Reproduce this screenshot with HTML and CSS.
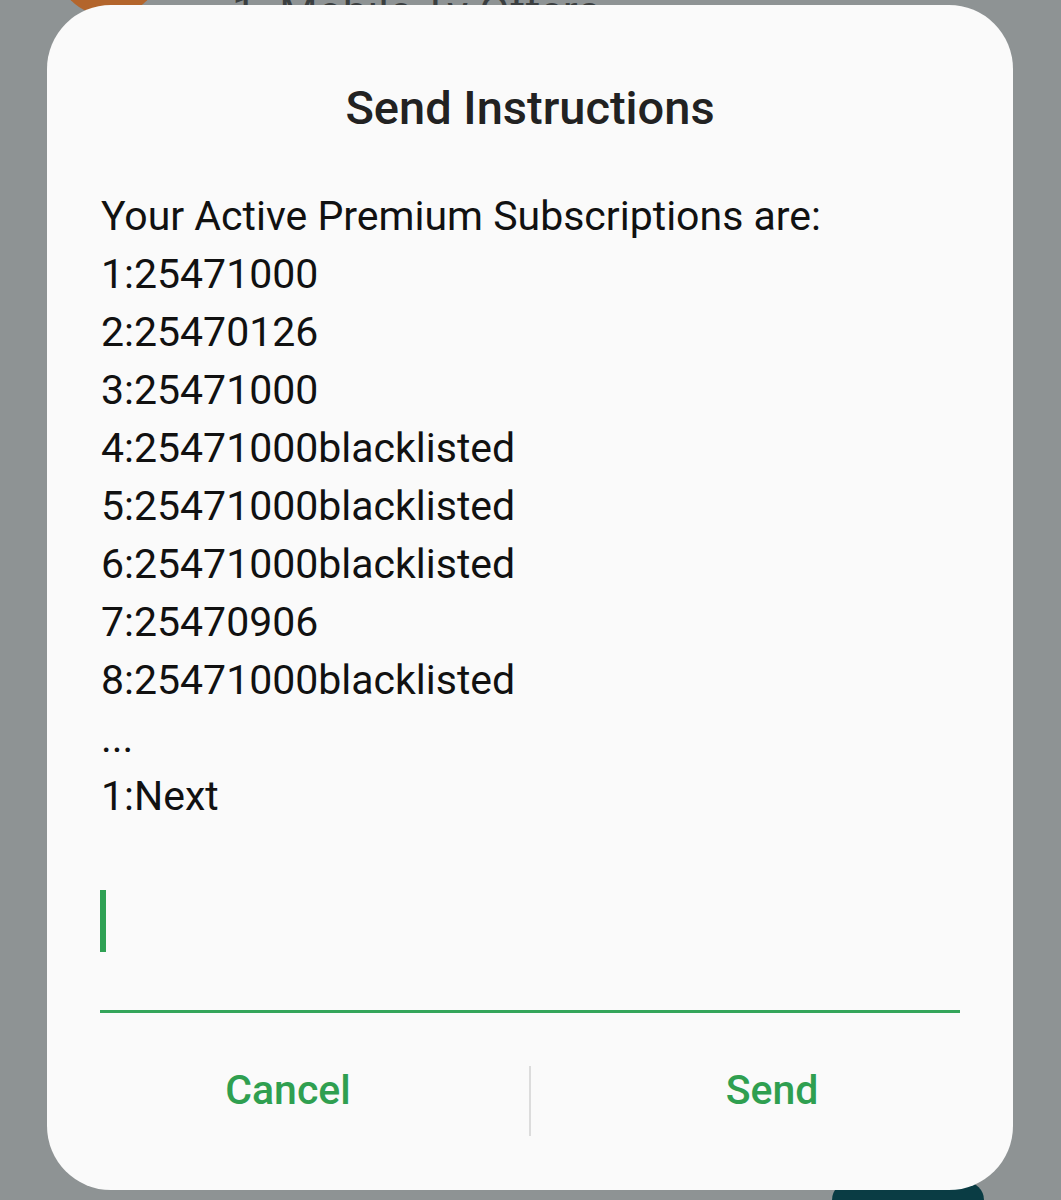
FILE: index.html
```html
<!DOCTYPE html>
<html lang="en">
<head>
    <meta charset="UTF-8">
    <meta name="viewport" content="width=device-width, initial-scale=1.0">
    <title>Send Instructions</title>
    <link rel="stylesheet" href="styles.css">
</head>
<body>
    <!-- contenido detras del dialogo -->
    <div class="fondo-avatar"></div>
    <div class="fondo-texto">1. Mobile Tv Offers</div>
    <div class="fondo-fab"></div>

    <div class="pantalla">
        <div class="dialogo">
            <h2 class="titulo">Send Instructions</h2>
            <div class="mensaje">
                <p>Your Active Premium Subscriptions are:</p>
                <p>1:25471000</p>
                <p>2:25470126</p>
                <p>3:25471000</p>
                <p>4:25471000blacklisted</p>
                <p>5:25471000blacklisted</p>
                <p>6:25471000blacklisted</p>
                <p>7:25470906</p>
                <p>8:25471000blacklisted</p>
                <p>...</p>
                <p>1:Next</p>
            </div>
            <div class="campo">
                <span class="cursor"></span>
            </div>
            <div class="botones">
                <button class="boton">Cancel</button>
                <span class="separador"></span>
                <button class="boton">Send</button>
            </div>
        </div>
    </div>
</body>
</html>
```

FILE: styles.css
```css
html {
    overflow: hidden;
}
body {
    margin: 0;
    background-color: #8e9394;
    font-family: Roboto, "Noto Sans", sans-serif;
    height: 1200px;
    overflow: hidden;
    position: relative;
}
.fondo-avatar {
    position: absolute;
    left: 55px;
    top: -92px;
    width: 108px;
    height: 108px;
    border-radius: 50%;
    background: #b3652c;
}
.fondo-texto {
    position: absolute;
    left: 232px;
    top: -14px;
    font-size: 44px;
    color: #3b3f40;
    white-space: nowrap;
}
.fondo-fab {
    position: absolute;
    left: 832px;
    top: 1182px;
    width: 152px;
    height: 18px;
    border-radius: 40px 40px 0 0;
    background: #0a3c44;
}
.pantalla {
    position: relative;
    padding: 5px 48px 0 47px;
}
.dialogo {
    background: #fafafa;
    border-radius: 64px;
    height: 1185px;
    box-sizing: border-box;
    padding: 78px 0 0 0;
    display: flex;
    flex-direction: column;
}
.titulo {
    margin: 0;
    text-align: center;
    font-size: 47px;
    line-height: 50px;
    font-weight: 500;
    color: #222;
}
.mensaje {
    padding: 54px 53px 0 54px;
    font-size: 41px;
    line-height: 58px;
    color: #111;
}
.mensaje p {
    margin: 0;
}
.campo {
    margin: 46px 53px 0 53px;
    height: 142px;
    border-bottom: 3px solid #34a55a;
    display: flex;
    align-items: flex-start;
    padding-top: 19px;
    box-sizing: border-box;
}
.cursor {
    width: 6px;
    height: 62px;
    background: #2fa154;
}
.botones {
    display: flex;
    align-items: center;
    margin-top: 53px;
    height: 70px;
}
.boton {
    flex: 1;
    background: none;
    border: none;
    font-family: Roboto, "Noto Sans", sans-serif;
    font-size: 41px;
    font-weight: 500;
    color: #2f9f50;
    padding: 0 0 22px 0;
    cursor: pointer;
}
.separador {
    width: 2px;
    height: 70px;
    background: #dcdcdc;
}
```
